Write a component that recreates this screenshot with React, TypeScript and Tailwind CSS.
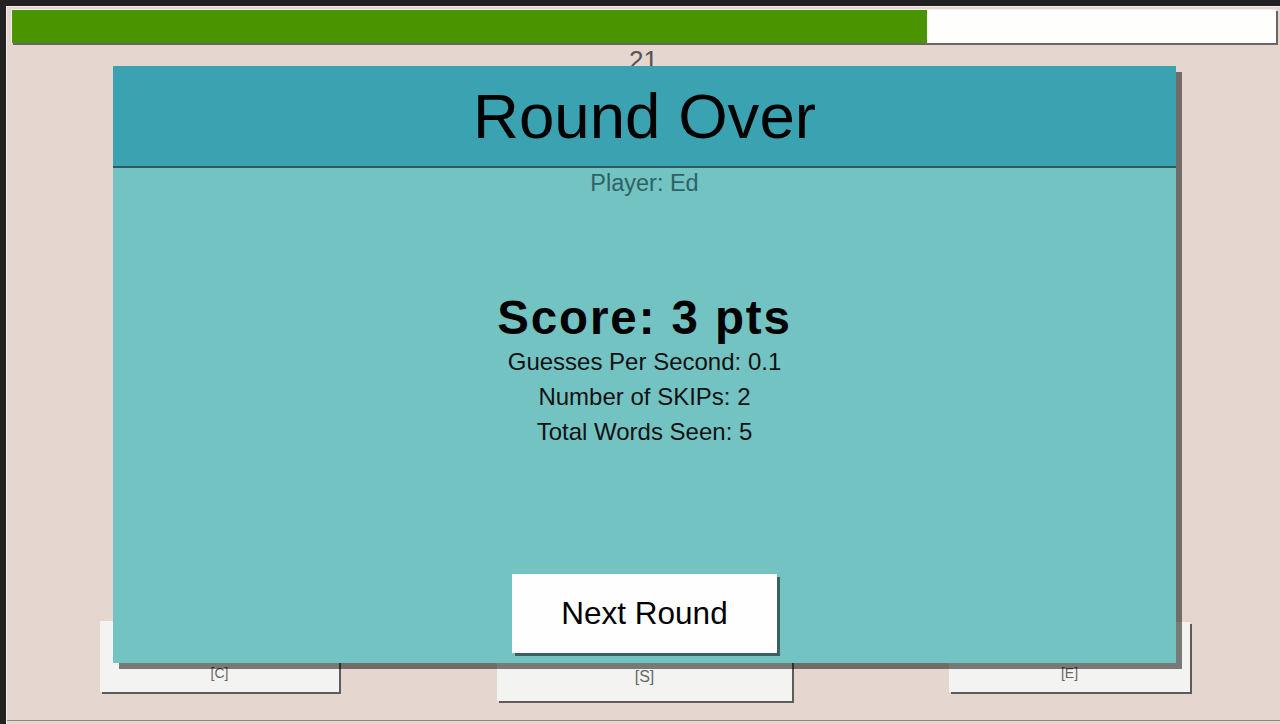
import React from "react";

const TOTAL_SECONDS = 29;
const SECONDS_LEFT = 21;

const stats = [
  { label: "Guesses Per Second", value: "0.1" },
  { label: "Number of SKIPs", value: "2" },
  { label: "Total Words Seen", value: "5" },
];

function ProgressBar({ fraction }: { fraction: number }) {
  return (
    <div className="ml-[4px] mr-[4px] mt-[2px] h-[34px] border-l border-t border-[#eef0ea] bg-[#fefffd] shadow-[2px_2px_0_#6b6563]">
      <div className="h-full bg-[#4a9400]" style={{ width: `${fraction * 100}%` }} />
    </div>
  );
}

function ActionCard({
  label,
  className,
  textClass,
}: {
  label: string;
  className: string;
  textClass: string;
}) {
  return (
    <div
      className={`flex shrink-0 flex-col justify-end bg-[#f3f4f1] text-center text-[#666] shadow-[2px_2px_0_#5e5c5a] ${className}`}
    >
      <span className={`leading-[20px] ${textClass}`}>{label}</span>
    </div>
  );
}

function RoundOverModal() {
  return (
    <div className="absolute left-[106px] top-[59px] flex h-[597px] w-[1063px] flex-col items-center bg-[#73c3c3] shadow-[6px_6px_0_rgba(0,0,0,0.5)]">
      <div className="flex h-[102px] w-full items-center justify-center border-b-2 border-[#2c5a5d] bg-[#3aa2b0]">
        <h1 className="text-[63.6px] leading-none text-black">Round Over</h1>
      </div>
      <div className="text-[23.5px] leading-[30px] text-[#2f6264]">Player: Ed</div>

      <div className="mt-[94px] flex flex-col items-center text-[#111]">
        <div className="text-[47.5px] font-bold leading-[52px] tracking-[1.9px] text-black">Score: 3 pts</div>
        {stats.map((s) => (
          <div key={s.label} className="text-[24px] leading-[35px]">
            {s.label}: {s.value}
          </div>
        ))}
      </div>

      <div className="mt-auto mb-[10px]">
        <button className="h-[79px] w-[265px] bg-[#fefefe] text-[31.5px] text-black shadow-[3px_3px_0_rgba(0,0,0,0.5)]">
          Next Round
        </button>
      </div>
    </div>
  );
}

export default function App() {
  return (
    <div className="h-[724px] w-full overflow-hidden bg-[#222222] pl-[6px] pt-[6px] font-['Liberation_Sans',Arial,sans-serif]">
      <div className="h-[718px] border-l border-t border-[#f3ece8] bg-[#e6d6d0]">
        <div className="relative flex h-[714px] flex-col border-b border-[#8c8684]">
          <ProgressBar fraction={SECONDS_LEFT / TOTAL_SECONDS} />
          <div className="mt-[2px] text-center text-[26px] leading-[30px] text-[#555]">{SECONDS_LEFT}</div>

          <div className="flex-1" />

          <div className="flex h-[99px] items-start">
            <ActionCard label="[C]" className="ml-[93px] h-[71px] w-[239px] pb-[9px]" textClass="text-[14px]" />
            <ActionCard label="[S]" className="ml-[158px] mt-[9px] h-[71px] w-[295px] pb-[14px]" textClass="text-[16px]" />
            <ActionCard label="[E]" className="ml-[157px] mt-[1px] h-[70px] w-[241px] pb-[9px]" textClass="text-[14px]" />
          </div>

          <RoundOverModal />
        </div>
      </div>
    </div>
  );
}
